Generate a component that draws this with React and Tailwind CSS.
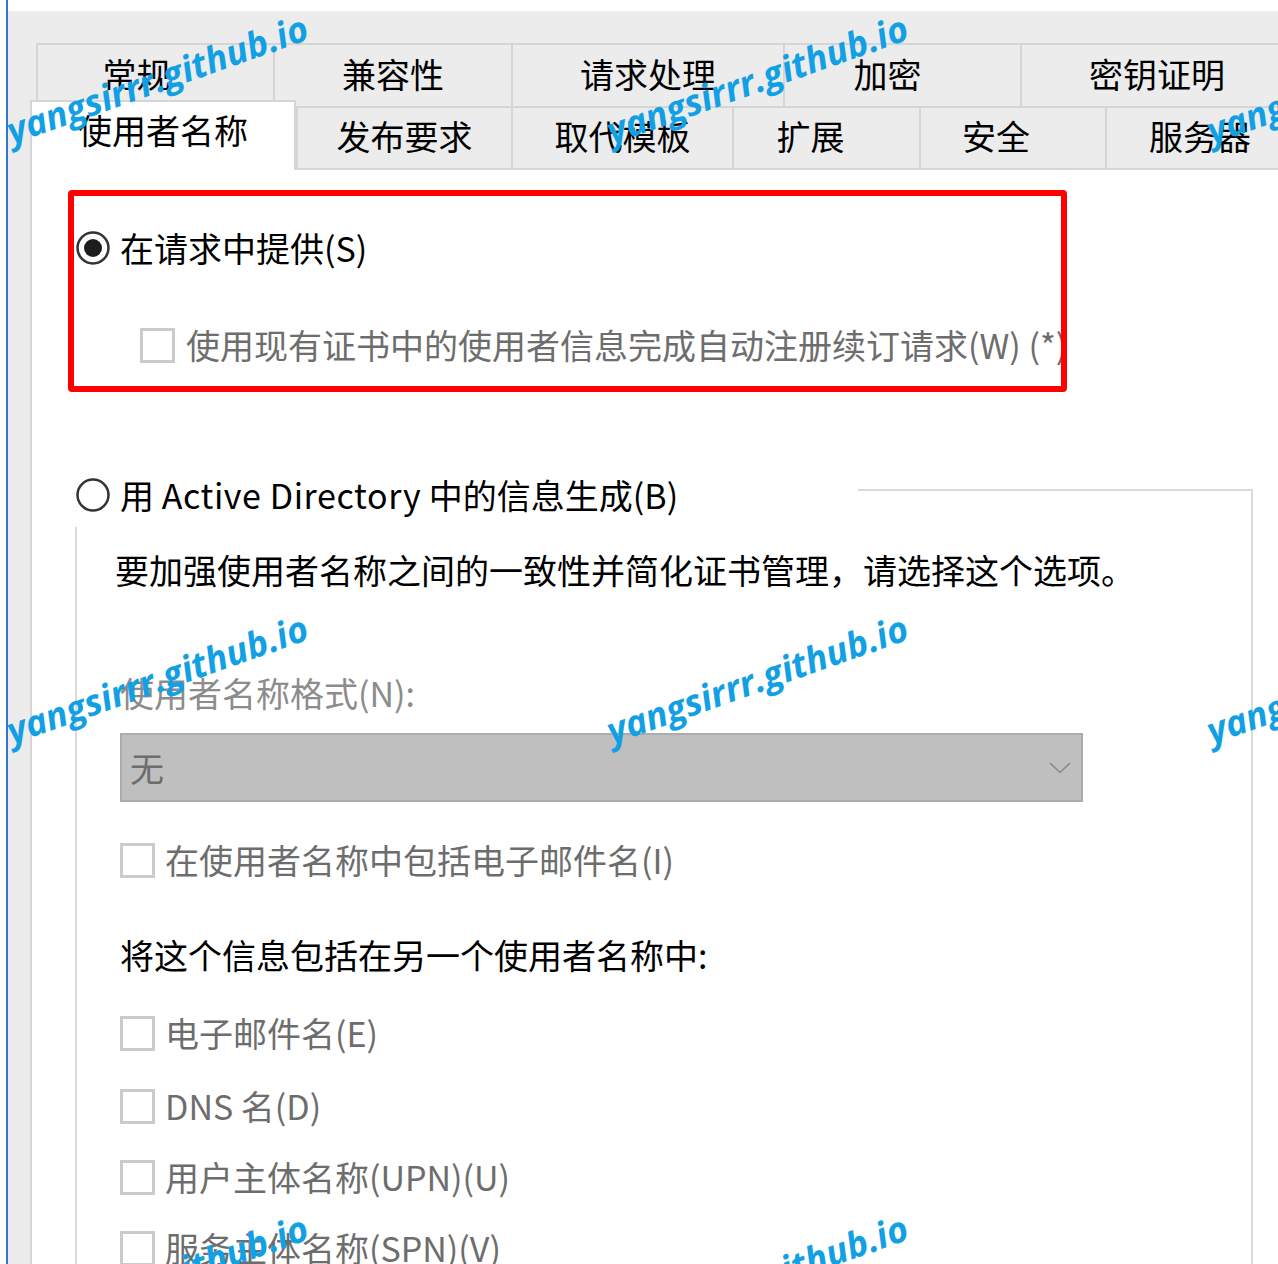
const ROW1 = [
  ['常规', 'w-[237px] pr-[38px]'],
  ['兼容性', 'w-[238px]'],
  ['请求处理', 'w-[272px]'],
  ['加密', 'w-[237px] pr-[30px]'],
  ['密钥证明', 'w-[274px] border-r-2'],
]

const ROW2 = [
  ['发布要求', 'w-[215px] border-l-0'],
  ['取代模板', 'w-[221px]'],
  ['扩展', 'w-[187px] pr-[32px]'],
  ['安全', 'w-[186px] pr-[34px]'],
  ['服务器', 'w-[190px] border-r-2'],
]

const MARKS = []
for (const y of [113, 713, 1313]) {
  for (const x of [14, 614, 1214]) MARKS.push({ x, y })
}

function Radio({ checked }) {
  return (
    <svg width="34" height="34" viewBox="0 0 34 34" className="shrink-0">
      <circle cx="17" cy="17" r="15.5" fill="#fff" stroke="#333" strokeWidth="2.5" />
      {checked && <circle cx="17" cy="17" r="9" fill="#1c1c1c" />}
    </svg>
  )
}

function Checkbox() {
  return <span className="block h-[35px] w-[35px] shrink-0 border-[3px] border-[#cbcbcb] bg-white" />
}

function CheckRow({ label, className }) {
  return (
    <div className={`ml-[43px] flex h-[40px] items-center gap-[10px] ${className}`}>
      <Checkbox />
      <span className="whitespace-nowrap text-[34px] leading-[40px] text-[#6d6d6d]">{label}</span>
    </div>
  )
}

function Tabs() {
  return (
    <div className="flex flex-col">
      <div className="ml-[6px] flex h-[63px]">
        {ROW1.map(([label, cls]) => (
          <div
            key={label}
            className={`flex h-full shrink-0 items-center justify-center border-l-2 border-t-2 border-[#d5d5d5] pb-[4px] text-[34px] leading-[40px] ${cls}`}
          >
            {label}
          </div>
        ))}
      </div>
      <div className="flex h-[62px] items-start">
        <div className="relative z-10 -mt-[6px] flex h-[70px] w-[266px] shrink-0 justify-center border-l-2 border-r-2 border-t-2 border-[#d5d5d5] bg-white pt-[8px] text-[34px] leading-[40px]">
          使用者名称
        </div>
        {ROW2.map(([label, cls]) => (
          <div
            key={label}
            className={`flex h-full shrink-0 items-center justify-center border-l-2 border-t-2 border-[#d5d5d5] pb-[4px] text-[34px] leading-[40px] ${cls}`}
          >
            {label}
          </div>
        ))}
      </div>
    </div>
  )
}

function Panel() {
  return (
    <div className="flex min-h-0 flex-1 flex-col border-l-2 border-t-2 border-[#d5d5d5] bg-white">
      <div className="ml-[36px] mt-[20px] h-[202px] w-[999px] shrink-0 rounded-[4px] border-[6px] border-[#ff0000]">
        <div className="ml-[2px] mt-[32px] flex h-[40px] items-center gap-[10px]">
          <Radio checked />
          <span className="whitespace-nowrap text-[34px] leading-[40px]">在请求中提供(S)</span>
        </div>
        <div className="ml-[66px] mt-[57px] flex h-[40px] w-[921px] items-center gap-[11px] overflow-hidden">
          <Checkbox />
          <span className="whitespace-nowrap text-[34px] leading-[40px] text-[#6d6d6d]">
            使用现有证书中的使用者信息完成自动注册续订请求(W) (*)
          </span>
        </div>
      </div>

      <div className="relative ml-[43px] mt-[97px] flex w-[1178px] flex-1 flex-col border-l-2 border-r-2 border-t-2 border-[#dadada]">
        <div className="absolute left-[-6px] top-[-28px] flex h-[64px] w-[787px] items-center gap-[10px] bg-white pl-[5px]">
          <Radio />
          <span className="whitespace-nowrap text-[34px] leading-[40px]">
            用 <span className="tracking-[0.6px]">Active Directory</span> 中的信息生成(B)
          </span>
        </div>

        <p className="ml-[38px] mt-[59px] whitespace-nowrap text-[34px] leading-[40px]">
          要加强使用者名称之间的一致性并简化证书管理，请选择这个选项。
        </p>
        <p className="ml-[43px] mt-[83px] whitespace-nowrap text-[34px] leading-[40px] text-[#8c8c8c]">
          使用者名称格式(N):
        </p>
        <div className="ml-[43px] mt-[20px] flex h-[69px] w-[963px] items-center justify-between border-2 border-[#acacac] bg-[#bfbfbf] pl-[8px] pr-[10px]">
          <span className="text-[34px] leading-[40px] text-[#6d6d6d]">无</span>
          <svg width="22" height="12" viewBox="0 0 22 12">
            <polyline points="1,1 11,10.5 21,1" fill="none" stroke="#8a8a8a" strokeWidth="1.6" />
          </svg>
        </div>
        <CheckRow label="在使用者名称中包括电子邮件名(I)" className="mt-[38px]" />
        <p className="ml-[43px] mt-[55px] whitespace-nowrap text-[34px] leading-[40px]">
          将这个信息包括在另一个使用者名称中:
        </p>
        <CheckRow label="电子邮件名(E)" className="mt-[38px]" />
        <CheckRow label="DNS 名(D)" className="mt-[33px]" />
        <CheckRow label="用户主体名称(UPN)(U)" className="mt-[31px]" />
        <CheckRow label="服务主体名称(SPN)(V)" className="mt-[31px]" />
      </div>
    </div>
  )
}

export default function App() {
  return (
    <div className="relative flex h-[1264px] w-[1278px] overflow-hidden bg-white font-['Noto_Sans_CJK_SC','Noto_Sans',sans-serif] text-black">
      <div className="w-[6px] shrink-0" />
      <div className="w-[2px] shrink-0 bg-[#3273d6]" />
      <div className="flex min-w-0 flex-1 flex-col pt-[11px]">
        <div className="flex flex-1 flex-col bg-[#ececec] pl-[22px] pt-[32px]">
          <Tabs />
          <Panel />
        </div>
      </div>

      {MARKS.map((m) => (
        <span
          key={`${m.x}-${m.y}`}
          className="pointer-events-none absolute z-20 origin-bottom-left -rotate-[19.5deg] whitespace-nowrap font-['Open_Sans',sans-serif] text-[36px] font-bold italic leading-none text-[#12a0e5]"
          style={{ left: m.x, top: m.y }}
        >
          yangsirrr.github.io
        </span>
      ))}
    </div>
  )
}
